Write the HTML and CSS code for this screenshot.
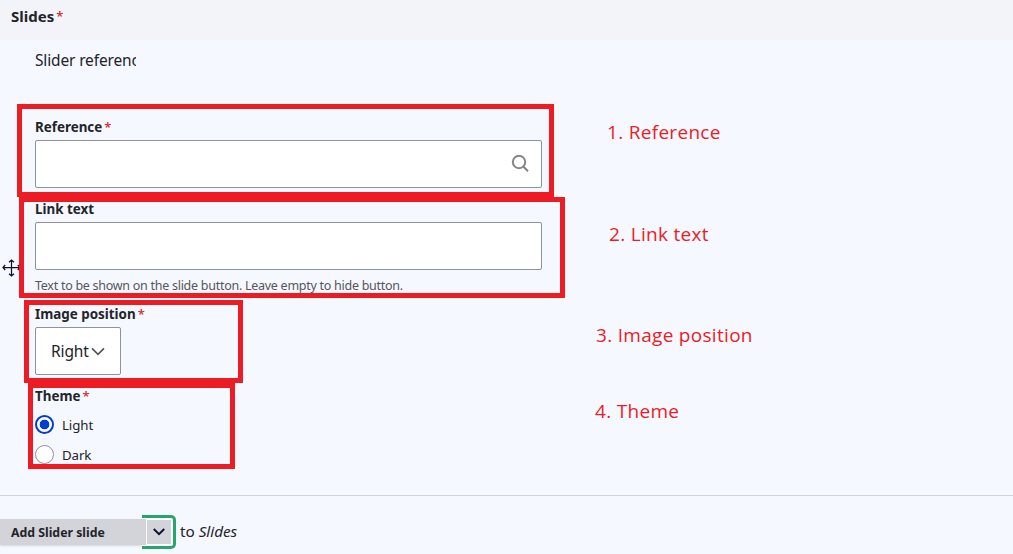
FILE: index.html
```html
<!DOCTYPE html>
<html lang="en">
<head>
<meta charset="utf-8">
<title>Slides</title>
<link rel="stylesheet" href="styles.css">
</head>
<body>
<main class="page">
  <header class="header"><span>Slides</span><span class="star">*</span></header>
  <section class="row">
    <div class="handle">
      <svg width="18" height="18" viewBox="0 0 18 18" fill="none" stroke="#0b1236" stroke-width="1.250"><path d="M9.500 1v16M1 8.500h17M7 3.200 9.500 1 12 3.200M7 14.800 9.500 17l2.500-2.200M3.200 6 1 8.500 3.200 11M15.800 6 18 8.500 15.800 11"/></svg>
    </div>
    <form class="fields">
      <div class="summary">Slider reference</div>
      <div class="field field-ref">
        <div class="label"><span>Reference</span><span class="star">*</span></div>
        <div class="input">
          <svg width="18" height="18" viewBox="0 0 18 18" fill="none" stroke="#868686" stroke-width="2"><circle cx="8" cy="7" r="6.200"/><path d="m12.300 11.500 4.700 4.700"/></svg>
        </div>
      </div>
      <div class="field field-link">
        <div class="label"><span>Link text</span></div>
        <div class="input"></div>
        <div class="help">Text to be shown on the slide button. Leave empty to hide button.</div>
      </div>
      <div class="field field-pos">
        <div class="label"><span>Image position</span><span class="star">*</span></div>
        <div class="select"><span>Right</span>
          <svg width="14" height="9" viewBox="0 0 14 9" fill="none" stroke="#545560" stroke-width="1.700"><path d="m1 1.300 6 6 6-6"/></svg>
        </div>
      </div>
      <div class="field field-theme">
        <div class="label"><span>Theme</span><span class="star">*</span></div>
        <div class="option"><span class="radio radio-on"></span><span>Light</span></div>
        <div class="option"><span class="radio"></span><span>Dark</span></div>
      </div>
    </form>
  </section>
  <footer class="footer">
    <div class="add">Add Slider slide</div>
    <div class="toggle">
      <svg width="12" height="8" viewBox="0 0 12 8" fill="none" stroke="#0b1236" stroke-width="2"><path d="m.8 1 5.200 5.200L11.200 1"/></svg>
    </div>
    <div class="target"><span>to</span><em>Slides</em></div>
  </footer>
  <div class="mark mark-1"></div>
  <div class="mark mark-2"></div>
  <div class="mark mark-3"></div>
  <div class="mark mark-4"></div>
  <div class="note note-1">1. Reference</div>
  <div class="note note-2">2. Link text</div>
  <div class="note note-3">3. Image position</div>
  <div class="note note-4">4. Theme</div>
</main>
</body>
</html>
```
FILE: styles.css
```css
* { box-sizing: border-box; }
body { margin: 0; background: #f5f8ff; color: #232429; font-family: "Noto Sans", sans-serif; }
svg { display: block; flex: none; }
.page { position: relative; height: 554px; overflow: hidden; }
.header { display: flex; align-items: center; height: 40px; padding: 0 0 8px 11px; background: #f3f4f9; font-size: 15px; line-height: 20px; font-weight: 700; }
.star { margin-left: 2px; color: #dc2323; font-size: 13px; font-weight: 500; line-height: 20px; }
.row { display: flex; height: 455px; }
.handle { display: flex; align-items: center; width: 35px; padding-left: 2px; }
.fields { width: 507px; padding-top: 10px; white-space: nowrap; }
.summary { width: 101px; height: 20px; overflow: hidden; font-size: 15.5px; letter-spacing: -0.150px; line-height: 21px; }
.field-ref { margin-top: 47px; }
.field-link { margin-top: 11px; }
.field-pos { margin-top: 9px; }
.field-theme { margin-top: 11px; }
.label { display: flex; height: 20px; margin-bottom: 3px; font-size: 13.400px; font-weight: 700; line-height: 20px; }
.input { display: flex; align-items: center; justify-content: flex-end; height: 48px; padding-right: 12px; background: #fff; border: 1px solid #8e929c; border-radius: 2px; }
.help { height: 20px; margin-top: 5px; color: #55565b; font-size: 12.500px; letter-spacing: -0.270px; line-height: 21px; }
.select { display: flex; align-items: center; gap: 2px; width: 86px; height: 48px; padding-left: 15px; background: #fff; border: 1px solid #8e929c; border-radius: 2px; font-size: 15.500px; letter-spacing: -0.120px; }
.option { display: flex; align-items: center; gap: 8px; height: 30px; font-size: 13.300px; letter-spacing: -0.100px; }
.label + .option { margin-top: 4px; }
.radio { width: 19px; height: 19px; margin-top: -2px; background: #fff; border: 1px solid #8e929c; border-radius: 50%; }
.radio-on { border: 2px solid #003ecc; background: radial-gradient(circle, #003ecc 4.500px, #fff 5.200px); }
.footer { display: flex; align-items: center; height: 59px; padding-top: 14px; border-top: 1px solid #d3d4d9; }
.add { display: flex; align-items: center; width: 142px; height: 26px; padding-left: 11px; background: #d3d4d9; box-shadow: 0 1px 2px #0002; font-size: 12.300px; font-weight: 700; white-space: nowrap; }
.toggle {
  display: flex; align-items: center; justify-content: center; width: 34px; height: 34px; padding-left: 2px;
  background:
    linear-gradient(#d3d4d9, #d3d4d9) 0 50% / 4px 26px no-repeat,
    linear-gradient(#d3d4d9, #d3d4d9) 5px 50% / 24px 24px no-repeat,
    #fff;
  border: 3px solid #26a769; border-left: 0; border-radius: 0 5px 5px 0;
}
.target { display: flex; gap: 4px; margin-left: 4px; padding-bottom: 2px; font-size: 15.300px; letter-spacing: -0.050px; line-height: 20px; }
.mark { position: absolute; border: 5px solid #ed1c24; }
.mark-1 { left: 17px; top: 104px; width: 537px; height: 93px; }
.mark-2 { left: 19px; top: 197px; width: 546px; height: 101px; }
.mark-3 { left: 24px; top: 300px; width: 219px; height: 83px; }
.mark-4 { left: 28px; top: 383px; width: 207px; height: 86px; }
.note { position: absolute; color: #ed1c24; font-family: "Open Sans", sans-serif; font-size: 19px; letter-spacing: 0.300px; line-height: 24px; white-space: nowrap; }
.note-1 { left: 607px; top: 120px; }
.note-2 { left: 609px; top: 222px; }
.note-3 { left: 596px; top: 323px; }
.note-4 { left: 595px; top: 399px; }
```
